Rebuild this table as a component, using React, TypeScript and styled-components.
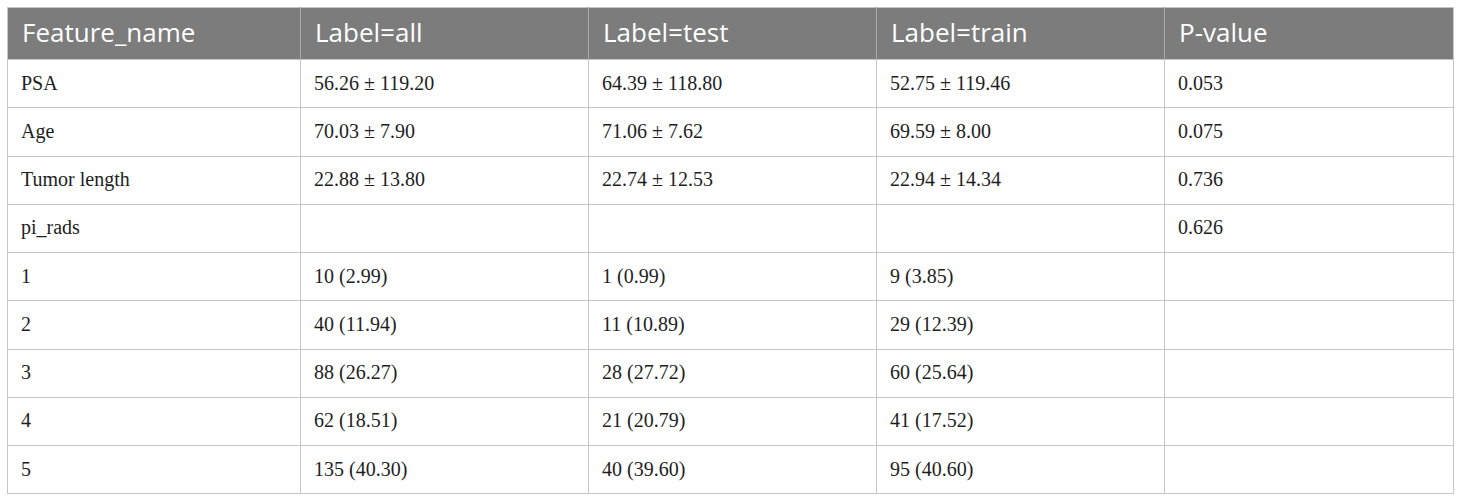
import React from "react";
import styled, { createGlobalStyle } from "styled-components";

const Global = createGlobalStyle`
  html, body { margin: 0; padding: 0; background: #ffffff; }
  body { padding: 7px 0 0 7px; }
`;

const Table = styled.table`
  border-collapse: collapse;
  width: 1446px;
  table-layout: fixed;
  border: 1px solid #c6c6c6;
`;

const HeadCell = styled.th`
  background: #7b7c7b;
  color: #ffffff;
  font-family: "Open Sans", "Noto Sans", sans-serif;
  font-weight: 400;
  font-size: 26px;
  text-align: left;
  height: 52px;
  padding: 0 0 3px 14px;
  box-sizing: border-box;
  border-left: 1px solid #a9aaa9;
  &:first-child { border-left: none; }
`;

const Cell = styled.td`
  font-family: "Liberation Serif", "Times New Roman", serif;
  font-size: 20px;
  color: #1e1e1e;
  height: 48.25px;
  padding: 0 0 1px 13px;
  box-sizing: border-box;
  border: 1px solid #c6c6c6;
  vertical-align: middle;
`;

const Col = styled.col<{ $w: number }>`
  width: ${(p) => p.$w}px;
`;

const headers = ["Feature_name", "Label=all", "Label=test", "Label=train", "P-value"];

const rows: string[][] = [
  ["PSA", "56.26 ± 119.20", "64.39 ± 118.80", "52.75 ± 119.46", "0.053"],
  ["Age", "70.03 ± 7.90", "71.06 ± 7.62", "69.59 ± 8.00", "0.075"],
  ["Tumor length", "22.88 ± 13.80", "22.74 ± 12.53", "22.94 ± 14.34", "0.736"],
  ["pi_rads", "", "", "", "0.626"],
  ["1", "10 (2.99)", "1 (0.99)", "9 (3.85)", ""],
  ["2", "40 (11.94)", "11 (10.89)", "29 (12.39)", ""],
  ["3", "88 (26.27)", "28 (27.72)", "60 (25.64)", ""],
  ["4", "62 (18.51)", "21 (20.79)", "41 (17.52)", ""],
  ["5", "135 (40.30)", "40 (39.60)", "95 (40.60)", ""],
];

export default function App() {
  return (
    <>
      <Global />
      <Table>
        <colgroup>
          <Col $w={293} />
          <Col $w={288} />
          <Col $w={288} />
          <Col $w={288} />
          <Col $w={289} />
        </colgroup>
        <thead>
          <tr>
            {headers.map((h) => (
              <HeadCell key={h}>{h}</HeadCell>
            ))}
          </tr>
        </thead>
        <tbody>
          {rows.map((r, i) => (
            <tr key={i}>
              {r.map((c, j) => (
                <Cell key={j}>{c}</Cell>
              ))}
            </tr>
          ))}
        </tbody>
      </Table>
    </>
  );
}
